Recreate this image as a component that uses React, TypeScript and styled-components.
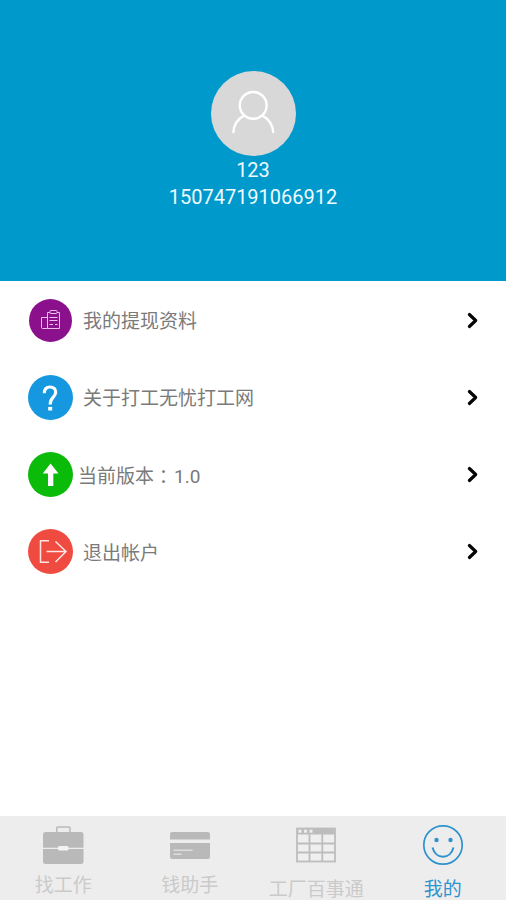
import React from 'react';
import styled, { createGlobalStyle } from 'styled-components';

const GlobalStyle = createGlobalStyle`
  * { box-sizing: border-box; }
  html, body { margin: 0; padding: 0; background: #fff; }
  body { overflow: hidden; font-family: Roboto, "Noto Sans CJK SC", sans-serif; }
  svg { display: block; flex: none; }
`;

const Screen = styled.div`
  display: flex;
  flex-direction: column;
  width: 100%;
  height: 900px;
  overflow: hidden;
`;

const Profile = styled.header`
  display: flex;
  flex-direction: column;
  align-items: center;
  flex: none;
  height: 281px;
  padding-top: 71px;
  background: #0099cc;
  color: #f0fbff;
`;

const Avatar = styled.div`
  width: 85px;
  height: 85px;
  border-radius: 50%;
  background: #d8d8d8;
  margin-bottom: 1px;
`;

const ProfileLine = styled.div`
  font-size: 20px;
  line-height: 27px;
  height: 27px;
`;

const Menu = styled.main`
  flex: 1;
  display: flex;
  flex-direction: column;
  padding-top: 0.4px;
`;

const MenuRow = styled.button`
  display: flex;
  align-items: center;
  height: 77.3px;
  width: 100%;
  padding: 0 27px 0 28px;
  border: 0;
  background: transparent;
  font: inherit;
  text-align: left;
`;

const Badge = styled.span<{ $color: string; $size: number }>`
  display: flex;
  align-items: center;
  justify-content: center;
  flex: none;
  width: ${(p) => p.$size}px;
  height: ${(p) => p.$size}px;
  margin: 0 ${(p) => (45 - p.$size) / 2}px;
  border-radius: 50%;
  background: ${(p) => p.$color};
`;

const RowLabel = styled.span<{ $gap: number }>`
  flex: 1;
  margin-left: ${(p) => p.$gap}px;
  padding-top: 4px;
  color: #7a7a7a;
  font-size: 19px;
  line-height: 24px;
`;

const WideColon = styled.span`
  display: inline-block;
  width: 20px;
  line-height: 20px;
  transform: translateY(1px);
  font-family: "Noto Sans CJK TC", sans-serif;
`;

const TabBar = styled.nav`
  display: grid;
  grid-template-columns: repeat(4, 1fr);
  flex: none;
  height: 84px;
  background: #ededed;
`;

const Tab = styled.button<{ $active?: boolean; $gap: number }>`
  display: flex;
  flex-direction: column;
  align-items: center;
  gap: ${(p) => p.$gap}px;
  min-width: 0;
  padding: 8px 0 0;
  border: 0;
  background: transparent;
  color: ${(p) => (p.$active ? '#2f94cd' : '#cacaca')};
  font: inherit;
  font-size: 19px;
  line-height: 24px;
  white-space: nowrap;
`;

const PersonIcon = () => (
  <svg width="85" height="85" viewBox="0 0 85 85" fill="none" stroke="#fff" strokeWidth="2.4">
    <circle cx="42.2" cy="34.400" r="13.4" />
    <path d="M22.300 62C22.500 53.500 26.500 48 33.500 44.300M50.900 44.300C57.900 48 61.900 53.500 62.300 62" />
  </svg>
);

const ClipboardIcon = () => (
  <svg width="43" height="43" viewBox="0 0 43 43" fill="none" stroke="#eabfea" strokeWidth="1">
    <path d="M21 13.500H18.500V29.500H30.500V13.500H28M18.500 18.500H12.500V28.500Q12.500 29.500 13.500 29.500H18.500" />
    <rect x="21" y="11.500" width="7" height="3" rx="0.8" />
    <path d="M20.500 18.500H28.500M20.500 21.500H28.500M20.500 25.500H24M26 25.500H28.500" />
  </svg>
);

const QuestionIcon = () => (
  <svg width="45" height="45" viewBox="0 0 45 45" fill="none" stroke="#fff" strokeWidth="3.2">
    <path d="M16.300 18.300C16.300 14.200 18.500 12 22 12C25.600 12 27.700 14.200 27.700 17.300C27.700 19.700 26.500 21 24.900 22.600C23 24.500 22.200 25.500 22.200 29.500" />
    <path d="M20.200 33.700H24.200" strokeWidth="3.6" />
  </svg>
);

const UpArrowIcon = () => (
  <svg width="45" height="45" viewBox="0 0 45 45">
    <path d="M22.500 11.500L30.500 21.500H25.300V34H20V21.500H14.800Z" fill="#fff" />
  </svg>
);

const ExitIcon = () => (
  <svg width="45" height="45" viewBox="0 0 45 45" fill="none" stroke="#ffe6e3" strokeWidth="1.5">
    <path d="M21 11.700H12.500V33.300H21M18.500 22.500H38M27.500 12.500L38 22.500L27.500 33" />
  </svg>
);

const ChevronIcon = () => (
  <svg width="12" height="17" viewBox="0 0 12 17" fill="none" stroke="#050505" strokeWidth="3.2" strokeLinecap="round" strokeLinejoin="round">
    <path d="M2.400 2.500L8.700 8.500L2.400 14.500" />
  </svg>
);

const BriefcaseIcon = () => (
  <svg width="42" height="42" viewBox="0 0 42 42">
    <path d="M14.800 9V4.200Q14.800 3 16 3H26.800Q28 3 28 4.200V9" fill="none" stroke="#b9b9b9" strokeWidth="1.500" />
    <rect x="1" y="8" width="40.500" height="32" rx="2.500" fill="#b9b9b9" />
    <path d="M1 24.300H42" stroke="#ededed" strokeWidth="1.200" />
    <rect x="16" y="22" width="10.500" height="4.500" rx="1.500" fill="#f3f3f3" />
  </svg>
);

const CardIcon = () => (
  <svg width="42" height="42" viewBox="0 0 42 42">
    <path d="M3 8H39Q41 8 41 10V15.500H1V10Q1 8 3 8Z" fill="#b9b9b9" />
    <path d="M1 19H41V33Q41 35 39 35H3Q1 35 1 33Z" fill="#b9b9b9" />
    <path d="M4.500 26.200H23.500M4.500 30.300H12.500" stroke="#dedede" strokeWidth="1.500" />
  </svg>
);

const TableIcon = () => (
  <svg width="42" height="42" viewBox="0 0 42 42">
    <rect x="2" y="4.500" width="38" height="33" fill="#efefef" stroke="#bdbdbd" strokeWidth="1.800" />
    <rect x="2" y="4.500" width="38" height="6" fill="#bdbdbd" />
    <path d="M2 19.500H40M2 28.500H40M14.500 10V38M27.300 10V38" stroke="#bdbdbd" strokeWidth="1.800" />
    <g fill="#eee">
      <rect x="3.500" y="5.700" width="3" height="3" />
      <rect x="9" y="5.700" width="3" height="3" />
      <rect x="14.500" y="5.700" width="3" height="3" />
    </g>
  </svg>
);

const SmileIcon = () => (
  <svg width="42" height="42" viewBox="0 0 42 42" fill="none" stroke="#2d93cf" strokeWidth="1.700">
    <circle cx="21" cy="21" r="19.200" />
    <path d="M10.500 23.500C12 29.300 16.200 32.700 21 32.700C25.800 32.700 30 29.300 31.500 23.500" strokeWidth="2" />
    <circle cx="14.500" cy="16" r="2.200" fill="#2d93cf" stroke="none" />
    <circle cx="28.500" cy="16" r="2.200" fill="#2d93cf" stroke="none" />
  </svg>
);

const rows = [
  { color: '#8b118c', size: 43, gap: 10, icon: <ClipboardIcon />, label: '我的提现资料' },
  { color: '#1598df', size: 45, gap: 10, icon: <QuestionIcon />, label: '关于打工无忧打工网' },
  { color: '#0abb0a', size: 45, gap: 5, icon: <UpArrowIcon />, label: <>当前版本<WideColon>：</WideColon>1.0</> },
  { color: '#f04b40', size: 45, gap: 10, icon: <ExitIcon />, label: '退出帐户' },
];

const tabs = [
  { label: '找工作', gap: 8, icon: <BriefcaseIcon /> },
  { label: '钱助手', gap: 8, icon: <CardIcon /> },
  { label: '工厂百事通', gap: 12, icon: <TableIcon /> },
  { label: '我的', gap: 12, icon: <SmileIcon />, active: true },
];

export default function App() {
  return (
    <Screen>
      <GlobalStyle />
      <Profile>
        <Avatar><PersonIcon /></Avatar>
        <ProfileLine>123</ProfileLine>
        <ProfileLine>150747191066912</ProfileLine>
      </Profile>
      <Menu>
        {rows.map((row) => (
          <MenuRow key={row.color}>
            <Badge $color={row.color} $size={row.size}>{row.icon}</Badge>
            <RowLabel $gap={row.gap}>{row.label}</RowLabel>
            <ChevronIcon />
          </MenuRow>
        ))}
      </Menu>
      <TabBar>
        {tabs.map((tab) => (
          <Tab key={tab.label} $active={tab.active} $gap={tab.gap}>
            {tab.icon}
            <span>{tab.label}</span>
          </Tab>
        ))}
      </TabBar>
    </Screen>
  );
}
